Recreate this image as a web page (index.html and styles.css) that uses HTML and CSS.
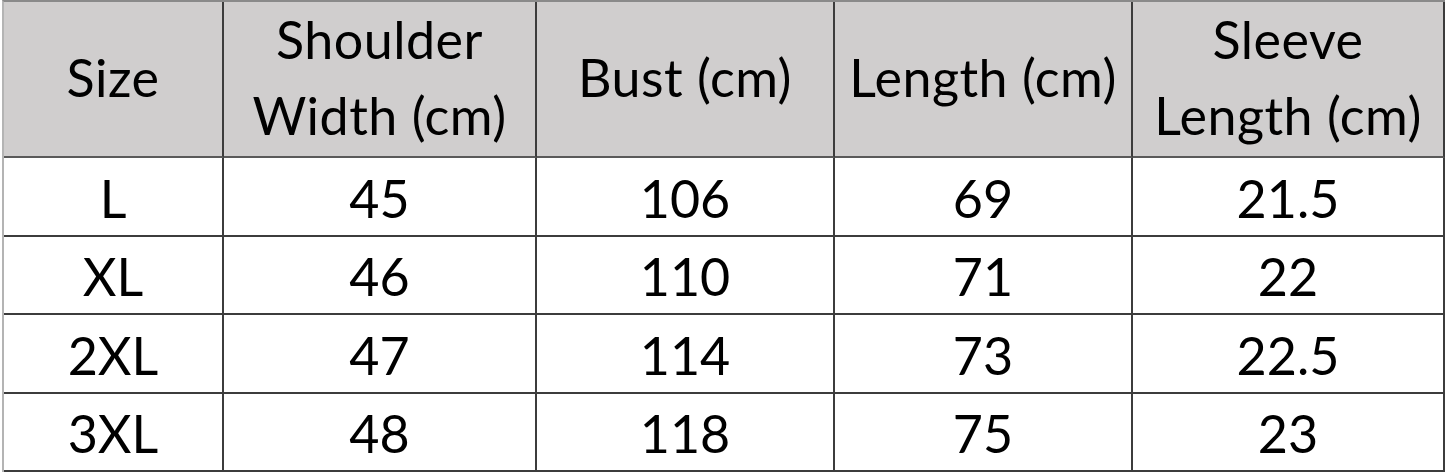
FILE: index.html
```html
<!DOCTYPE html>
<html>
<head>
<meta charset="utf-8">
<link rel="stylesheet" href="styles.css">
</head>
<body>
<div class="sheet">
  <div class="cell head">Size</div>
  <div class="cell head">Shoulder<br>Width (cm)</div>
  <div class="cell head">Bust (cm)</div>
  <div class="cell head">Length (cm)</div>
  <div class="cell head">Sleeve<br>Length (cm)</div>

  <div class="cell">L</div><div class="cell">45</div><div class="cell">106</div><div class="cell">69</div><div class="cell">21.5</div>
  <div class="cell">XL</div><div class="cell">46</div><div class="cell">110</div><div class="cell">71</div><div class="cell">22</div>
  <div class="cell">2XL</div><div class="cell">47</div><div class="cell">114</div><div class="cell">73</div><div class="cell">22.5</div>
  <div class="cell">3XL</div><div class="cell">48</div><div class="cell">118</div><div class="cell">75</div><div class="cell">23</div>
</div>
</body>
</html>
```
FILE: styles.css
```css
html, body {
  margin: 0;
  padding: 0;
  background: #ffffff;
}
.sheet {
  margin-left: 2px;
  width: 1441px;
  display: grid;
  grid-template-columns: 220px 313px 298px 298px 312px;
  grid-template-rows: 156px 79px 78px 79px 78px;
  border-left: 2px solid #b4b4b4;
  border-top: 2px solid #8a8a8a;
  font-family: Lato, "Liberation Sans", sans-serif;
  font-size: 52px;
  color: #000;
}
.cell {
  display: flex;
  align-items: center;
  justify-content: center;
  text-align: center;
  border-right: 2px solid #3c3c3c;
  border-bottom: 2px solid #3c3c3c;
  line-height: 1.45;
  padding-top: 4px;
  box-sizing: border-box;
}
.head {
  background: #d0cece;
  border-bottom-color: #5a5a5a;
  padding-top: 0;
  padding-bottom: 3px;
  letter-spacing: 0.5px;
}
```
